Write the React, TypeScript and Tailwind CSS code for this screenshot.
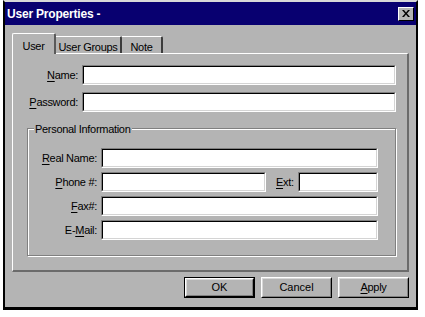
import React from "react";

const font = { fontFamily: '"Liberation Sans", Arial, sans-serif' };

function Field({ className = "" }: { className?: string }) {
    return (
        <div className={`h-[20px] border border-t-[#808080] border-l-[#808080] border-b-white border-r-white ${className}`}>
            <div className="h-full bg-white border border-t-black border-l-black border-b-[#d4d4d4] border-r-[#d4d4d4]" />
        </div>
    );
}

function Label({ text, u, className = "" }: { text: string; u: number; className?: string }) {
    return (
        <span className={`text-[11px] text-black whitespace-nowrap tracking-[-0.3px] ${className}`}>
            {text.slice(0, u)}
            <span className="underline underline-offset-2">{text[u]}</span>
            {text.slice(u + 1)}
        </span>
    );
}

function Button({ children, isDefault = false }: { children: React.ReactNode; isDefault?: boolean }) {
    return (
        <div className={`w-[71px] h-[21px] ${isDefault ? "border border-black" : ""}`}>
            <div className="h-full border border-t-white border-l-white border-b-black border-r-black">
                <div className="h-full flex items-center justify-center border border-t-[#d8d8d8] border-l-[#d8d8d8] border-b-[#808080] border-r-[#808080] text-[11px] text-black">
                    {children}
                </div>
            </div>
        </div>
    );
}

export default function App() {
    return (
        <div className="w-[425px] h-[317px] bg-white pl-[3px]" style={font}>
            <div className="w-[415px] h-[310px] flex flex-col bg-[#b4b4b4] border-x-2 border-b-[3px] border-t-2 border-black border-t-[#d8d8d8]">
                {/* title bar */}
                <div className="h-[23px] bg-[#080070] flex items-center justify-between pl-[2px] pr-[2px]">
                    <span className="text-[12px] font-bold text-white tracking-[-0.2px]">User Properties -</span>
                    <div className="w-[16px] h-[14px] border border-t-white border-l-white border-b-black border-r-black bg-[#b4b4b4] flex items-center justify-center">
                        <svg width="8" height="7" viewBox="0 0 8 7">
                            <path d="M0 0h2l2 2.5L6 0h2L5 3.5 8 7H6L4 4.5 2 7H0l3-3.5z" fill="black" />
                        </svg>
                    </div>
                </div>

                <div className="flex flex-col px-[7px]">
                    {/* tabs */}
                    <div className="flex items-end h-[20px] mt-[8px] relative z-10">
                        <div className="w-[44px] h-[21px] -mb-px bg-[#b4b4b4] border-t border-l border-white border-r-2 border-r-[#5a5a5a] rounded-tl-[2px] rounded-tr-[2px] flex justify-center pt-[4px]">
                            <span className="text-[11px] text-black tracking-[-0.3px]">User</span>
                        </div>
                        <div className="w-[66px] h-[17px] border-t border-white border-r-2 border-r-[#3c3c3c] rounded-tr-[2px] flex justify-center pt-[2px]">
                            <span className="text-[11px] text-black tracking-[-0.3px]">User Groups</span>
                        </div>
                        <div className="w-[41px] h-[17px] border-t border-white border-r-2 border-r-[#3c3c3c] rounded-tr-[2px] flex justify-center pt-[2px]">
                            <span className="text-[11px] text-black tracking-[-0.3px]">Note</span>
                        </div>
                    </div>

                    {/* panel */}
                    <div className="h-[219px] border-t border-l border-white border-r-2 border-b-2 border-r-[#6b6b6b] border-b-[#6b6b6b] pl-[14px] pr-[11px] pt-[11px] flex flex-col">
                        <div className="flex items-center gap-[4px]">
                            <div className="w-[51px] flex justify-end"><Label text="Name:" u={0} /></div>
                            <Field className="flex-1" />
                        </div>
                        <div className="flex items-center gap-[4px] mt-[7px]">
                            <div className="w-[51px] flex justify-end"><Label text="Password:" u={0} /></div>
                            <Field className="flex-1" />
                        </div>

                        {/* group box */}
                        <div className="relative mt-[16px] h-[128px] border border-[#808080] shadow-[inset_1px_1px_0_white,1px_1px_0_white] pt-[19px] pr-[17px] flex flex-col gap-[4px]">
                            <span className="absolute -top-[8px] left-[6px] px-[1px] bg-[#b4b4b4] text-[11px] text-black tracking-[-0.3px]">Personal Information</span>
                            <div className="flex items-center gap-[4px]">
                                <div className="w-[69px] flex justify-end"><Label text="Real Name:" u={0} /></div>
                                <Field className="flex-1" />
                            </div>
                            <div className="flex items-center">
                                <div className="w-[69px] flex justify-end"><Label text="Phone #:" u={0} /></div>
                                <Field className="w-[165px] ml-[4px]" />
                                <Label text="Ext:" u={0} className="ml-[10px]" />
                                <Field className="flex-1 ml-[4px]" />
                            </div>
                            <div className="flex items-center gap-[4px]">
                                <div className="w-[69px] flex justify-end"><Label text="Fax#:" u={0} /></div>
                                <Field className="flex-1" />
                            </div>
                            <div className="flex items-center gap-[4px]">
                                <div className="w-[69px] flex justify-end"><Label text="E-Mail:" u={2} /></div>
                                <Field className="flex-1" />
                            </div>
                        </div>
                    </div>

                    {/* buttons */}
                    <div className="flex justify-end gap-[6px] mt-[5px]">
                        <Button isDefault>OK</Button>
                        <Button>Cancel</Button>
                        <Button><Label text="Apply" u={0} /></Button>
                    </div>
                </div>
            </div>
        </div>
    );
}
